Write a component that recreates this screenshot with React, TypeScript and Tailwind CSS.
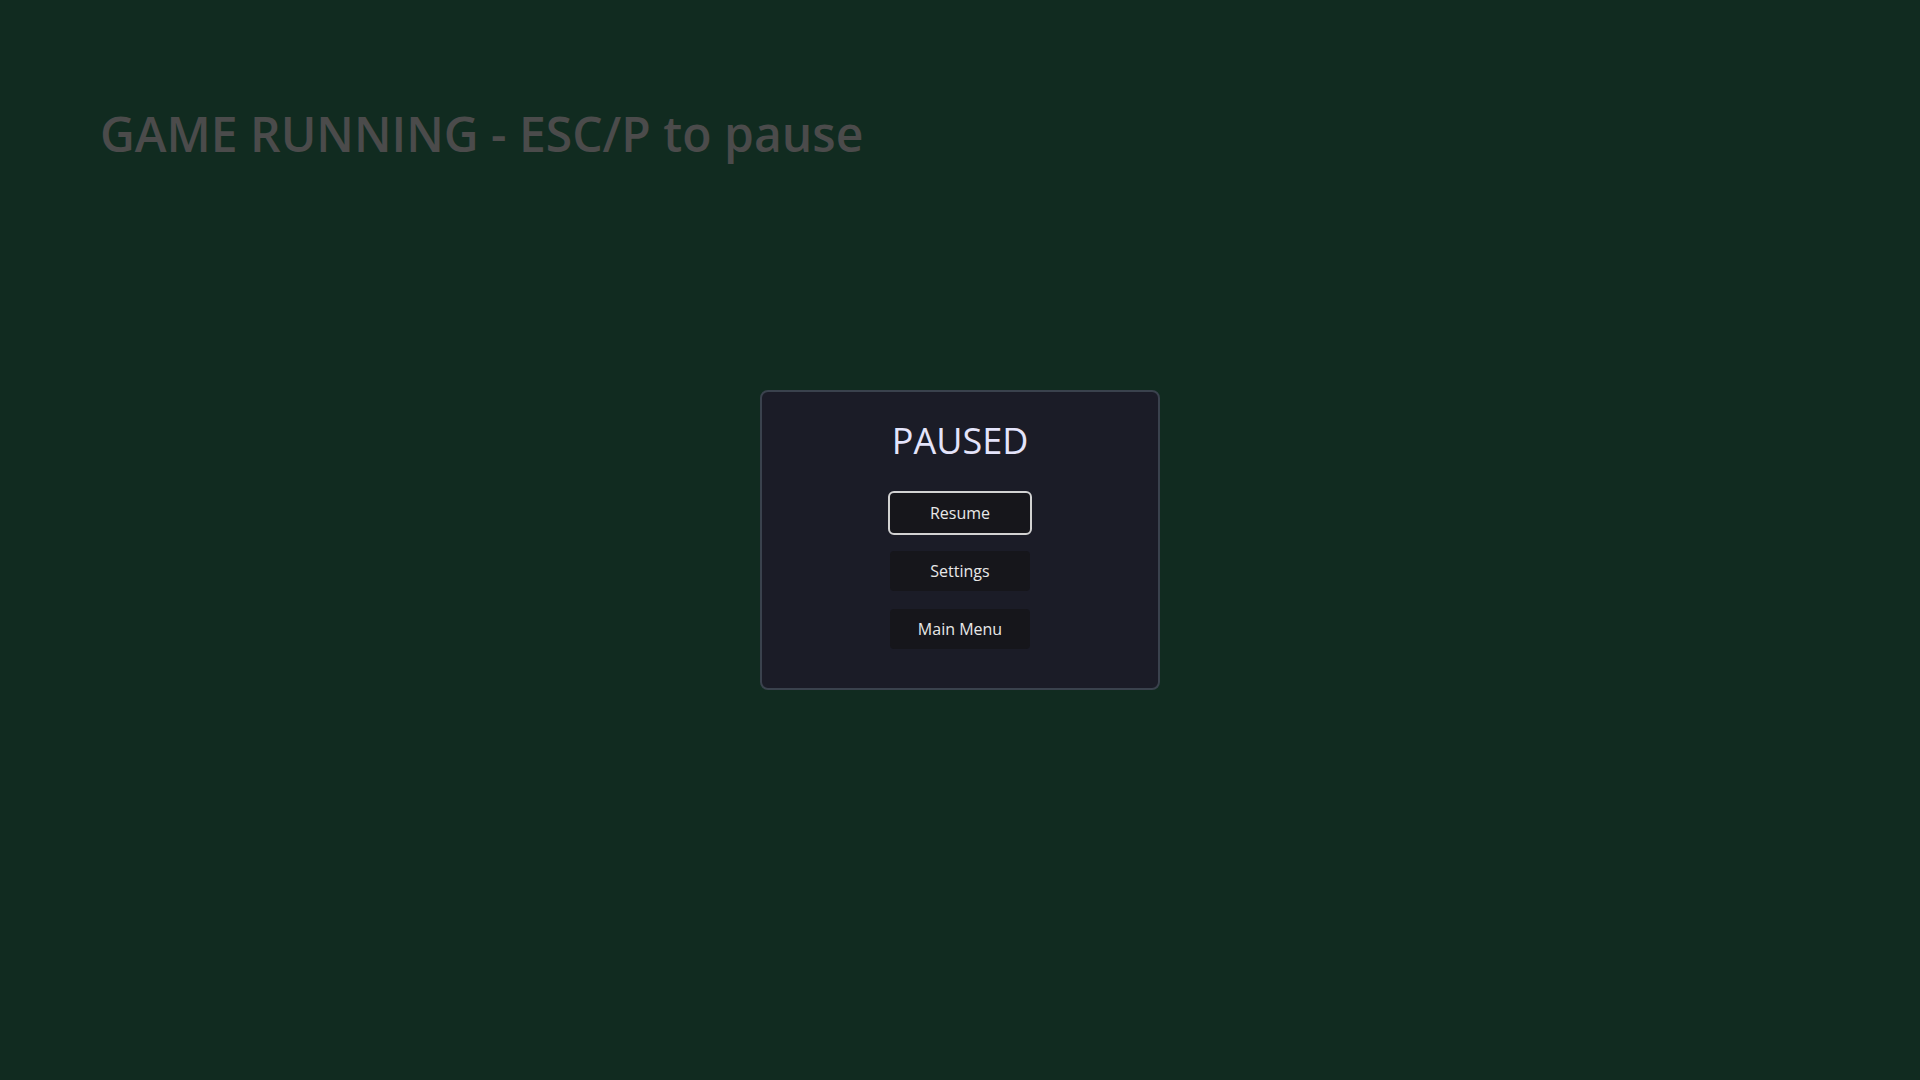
import { useState } from 'react'

const ITEMS = ['Resume', 'Settings', 'Main Menu']

export default function App() {
  const [focused, setFocused] = useState(0)

  return (
    <div
      className="relative h-screen w-full overflow-hidden bg-[#112b20]"
      style={{ fontFamily: '"Open Sans", "Noto Sans", sans-serif' }}
    >
      <div className="pl-[100px] pt-[110px]">
        <h1 className="text-[48px] leading-none font-semibold text-[#4b4b4b]">
          GAME RUNNING - ESC/P to pause
        </h1>
      </div>

      {/* pause overlay */}
      <div className="absolute inset-0 flex items-center justify-center">
        <div className="flex w-[400px] h-[300px] flex-col items-center rounded-lg border-2 border-[#3a424d] bg-[#1b1c27] pt-[29px]">
          <h2 className="text-[36px] leading-[40px] font-medium text-[#e4e4fb]">PAUSED</h2>
          <div className="mt-[32px] flex flex-col gap-[18px]">
            {ITEMS.map((label, i) => (
              <button
                key={label}
                type="button"
                onMouseEnter={() => setFocused(i)}
                className={
                  'h-[40px] w-[140px] rounded bg-[#16161b] text-[16px] font-medium text-[#e8e8e8] ' +
                  (focused === i ? 'outline-2 outline-[#d2d2d2] outline-offset-0' : 'outline-none')
                }
              >
                {label}
              </button>
            ))}
          </div>
        </div>
      </div>
    </div>
  )
}
